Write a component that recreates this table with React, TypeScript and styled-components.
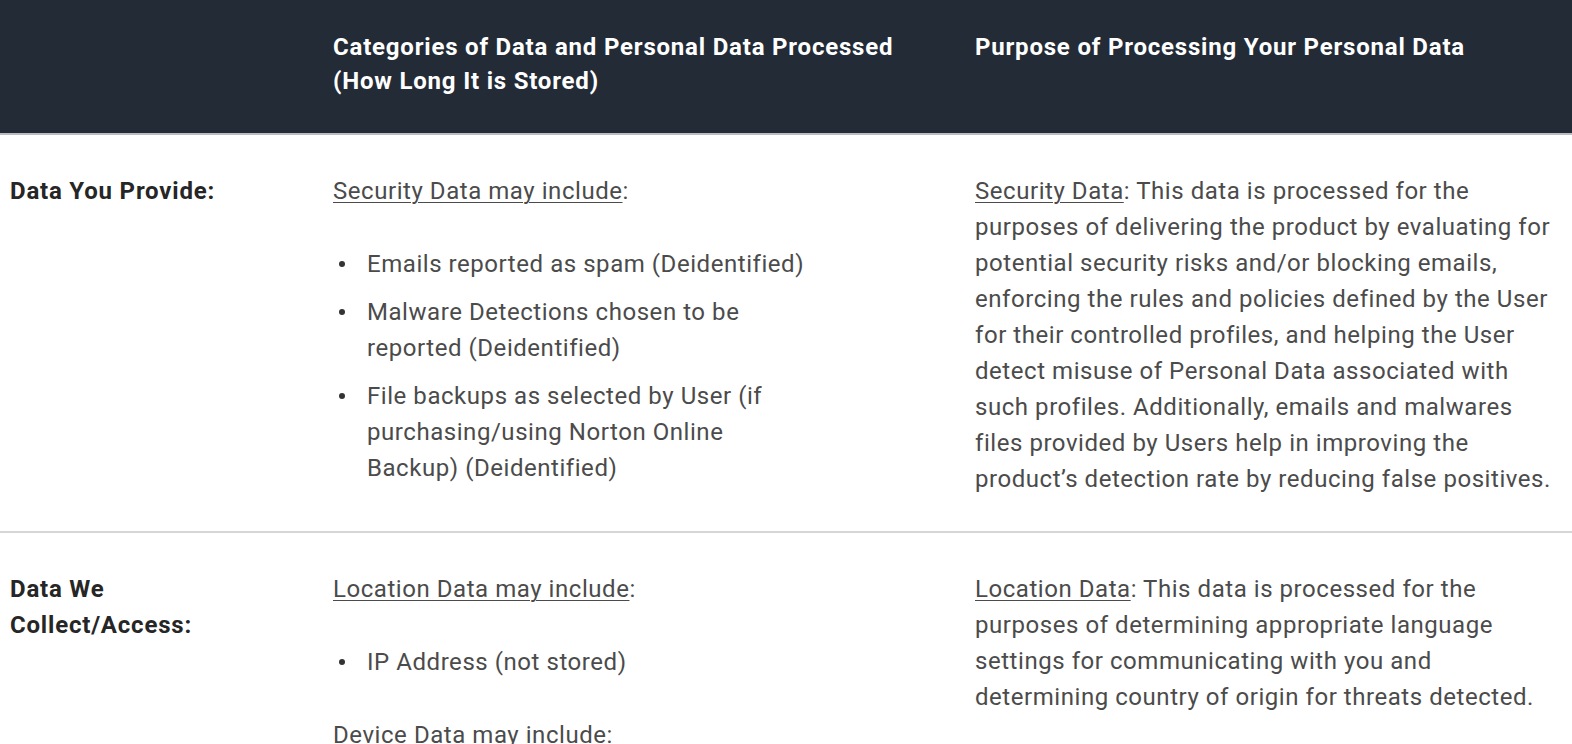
import React from 'react';
import styled, { createGlobalStyle } from 'styled-components';

const GlobalStyle = createGlobalStyle`
  html, body {
    margin: 0;
    padding: 0;
    background: #ffffff;
  }
  body {
    font-family: Roboto, "Liberation Sans", Arial, sans-serif;
    -webkit-font-smoothing: antialiased;
  }
`;

const Table = styled.div`
  width: 1572px;
  display: grid;
  grid-template-columns: 333px 642px 1fr;
`;

const HeadRow = styled.div`
  display: contents;
`;

const HeadCell = styled.div`
  background: #232b37;
  color: #ffffff;
  font-weight: 700;
  font-size: 24px;
  letter-spacing: 0.8px;
  line-height: 34px;
  height: 135px;
  box-sizing: border-box;
  padding: 30px 10px 0 0;
  border-bottom: 2px solid #b9bcc0;
`;

const BodyRow = styled.div<{ last?: boolean }>`
  display: contents;

  & > * {
    border-bottom: ${({ last }) => (last ? 'none' : '2px solid #d6d6d6')};
  }
`;

const Cell = styled.div`
  padding: 38px 8px 34px 0;
  font-size: 24px;
  letter-spacing: 0.55px;
  line-height: 36px;
  color: #4b4b4b;
`;

const LabelCell = styled(Cell)`
  padding-left: 10px;
  color: #262626;
  font-weight: 700;
  letter-spacing: 0.8px;
`;

const Content = styled.div`
  max-width: 472px;
`;

const Para = styled.p`
  margin: 0;

  & + & {
    margin-top: 37px;
  }
`;

const Underline = styled.span`
  text-decoration: underline;
  text-decoration-thickness: 1px;
  text-underline-offset: 3px;
`;

const List = styled.ul<{ flush?: boolean }>`
  list-style: none;
  margin: 37px 0 ${({ flush }) => (flush ? '0' : '37px')};
  padding: 0;

  li + li {
    margin-top: 12px;
  }
`;

const Item = styled.li`
  position: relative;
  padding-left: 34px;

  &::before {
    content: '';
    position: absolute;
    left: 6px;
    top: 15px;
    width: 6px;
    height: 6px;
    border-radius: 50%;
    background: #333333;
  }
`;

export default function App() {
  return (
    <>
      <GlobalStyle />
      <Table>
        <HeadRow>
          <HeadCell />
          <HeadCell>
            Categories of Data and Personal Data Processed
            <br />
            (How Long It is Stored)
          </HeadCell>
          <HeadCell>Purpose of Processing Your Personal Data</HeadCell>
        </HeadRow>

        <BodyRow>
          <LabelCell>Data You Provide:</LabelCell>
          <Cell>
            <Content>
              <Para>
                <Underline>Security Data may include</Underline>:
              </Para>
              <List flush>
                <Item>Emails reported as spam (Deidentified)</Item>
                <Item>Malware Detections chosen to be reported (Deidentified)</Item>
                <Item>
                  File backups as selected by User (if purchasing/using Norton Online Backup)
                  (Deidentified)
                </Item>
              </List>
            </Content>
          </Cell>
          <Cell>
            <Para>
              <Underline>Security Data</Underline>: This data is processed for the purposes of
              delivering the product by evaluating for potential security risks and/or blocking
              emails, enforcing the rules and policies defined by the User for their controlled
              profiles, and helping the User detect misuse of Personal Data associated with such
              profiles. Additionally, emails and malwares files provided by Users help in improving
              the product’s detection rate by reducing false positives.
            </Para>
          </Cell>
        </BodyRow>

        <BodyRow last>
          <LabelCell>
            Data We
            <br />
            Collect/Access:
          </LabelCell>
          <Cell>
            <Content>
              <Para>
                <Underline>Location Data may include</Underline>:
              </Para>
              <List>
                <Item>IP Address (not stored)</Item>
              </List>
              <Para>Device Data may include:</Para>
            </Content>
          </Cell>
          <Cell>
            <Para>
              <Underline>Location Data</Underline>: This data is processed for the purposes of
              determining appropriate language settings for communicating with you and determining
              country of origin for threats detected.
            </Para>
          </Cell>
        </BodyRow>
      </Table>
    </>
  );
}
